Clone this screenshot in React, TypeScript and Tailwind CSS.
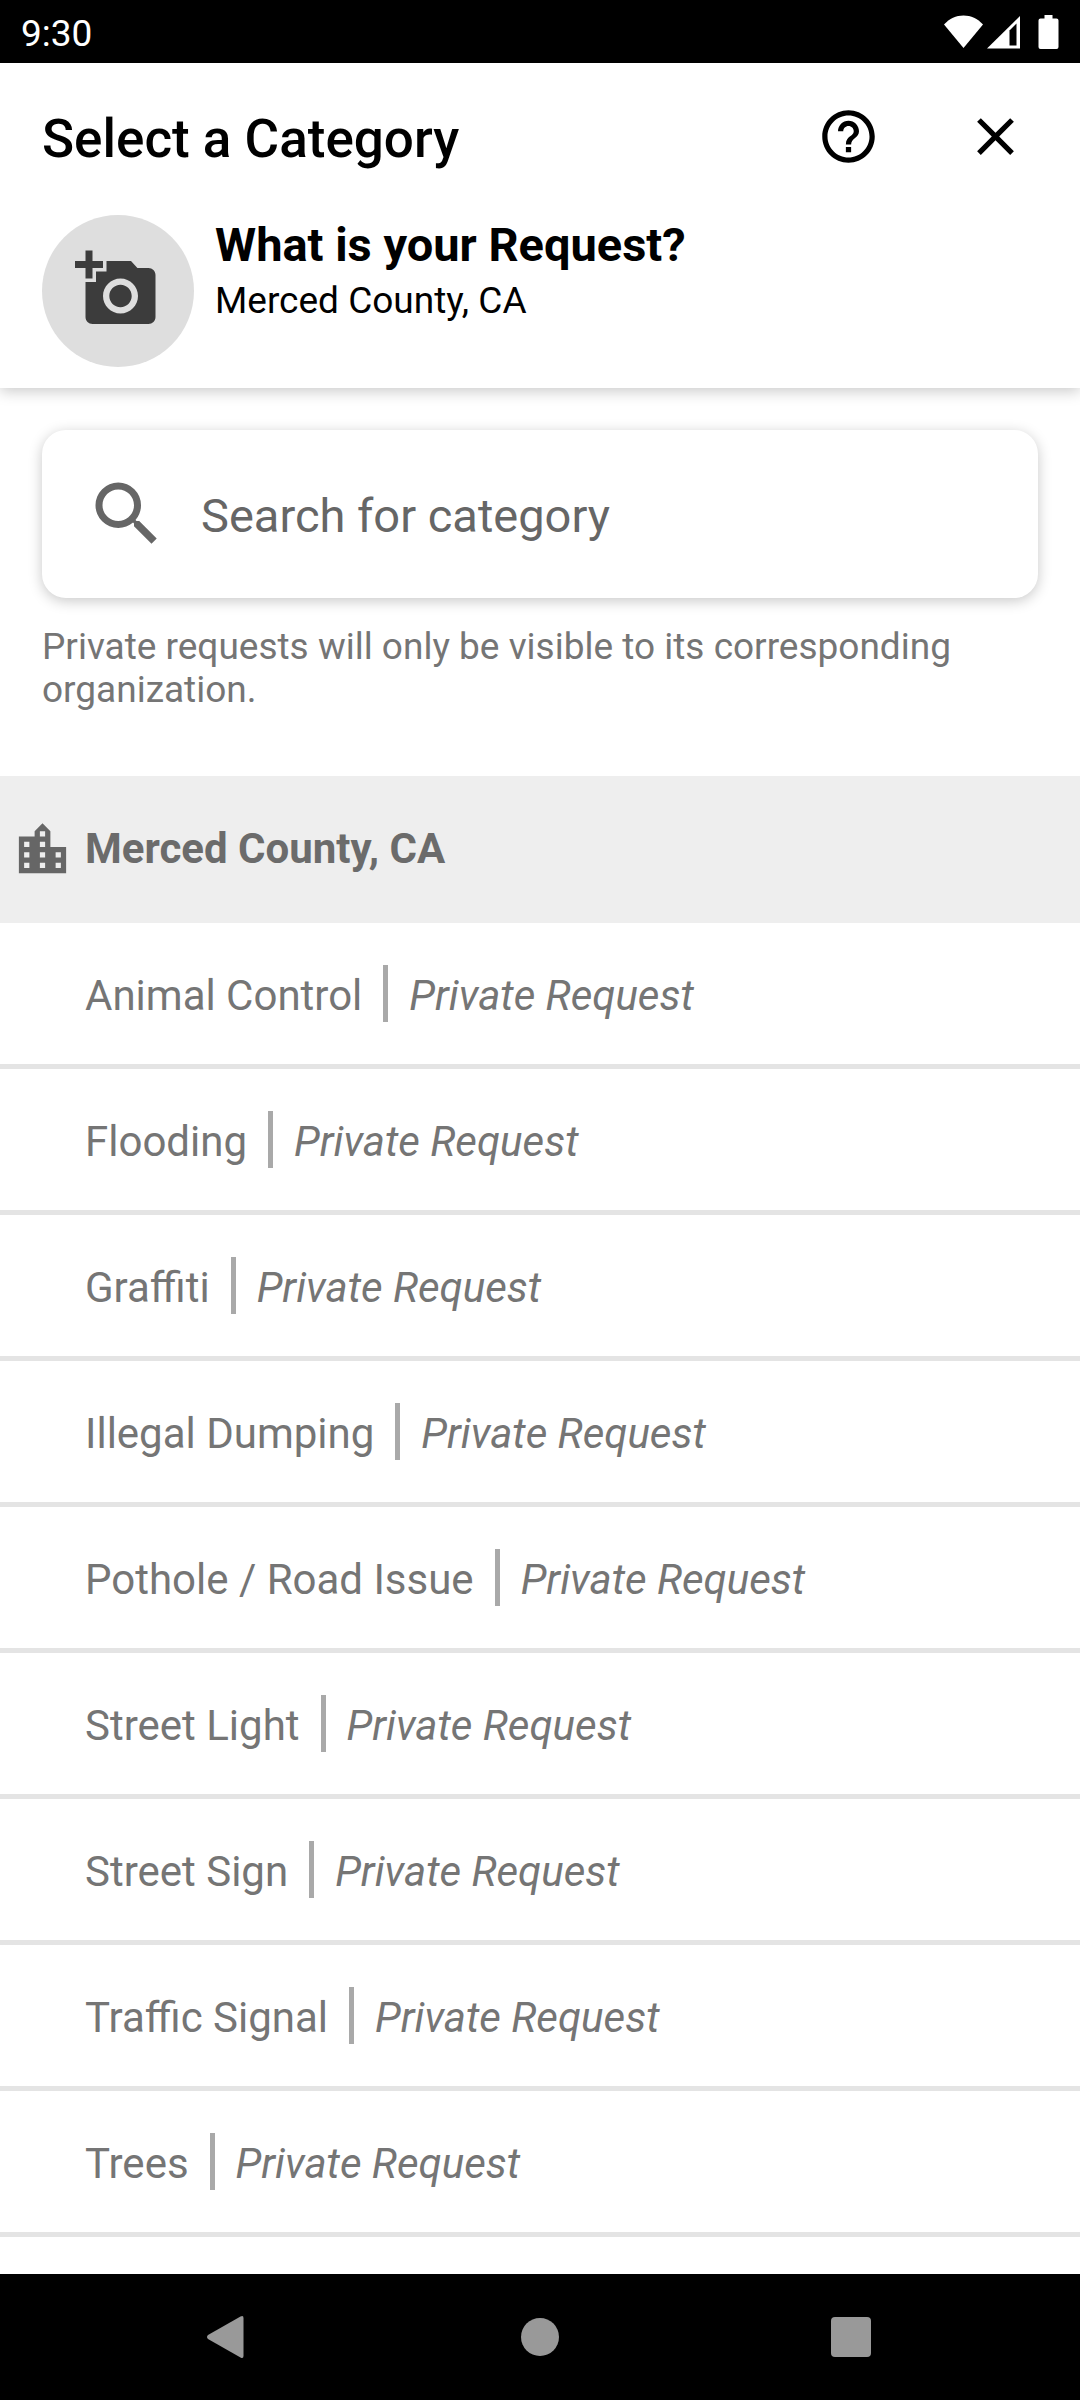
import { useState } from "react";
import {
  MdAddAPhoto,
  MdClose,
  MdHelpOutline,
  MdLocationCity,
  MdSearch,
} from "react-icons/md";

const categories = [
  "Animal Control",
  "Flooding",
  "Graffiti",
  "Illegal Dumping",
  "Pothole / Road Issue",
  "Street Light",
  "Street Sign",
  "Traffic Signal",
  "Trees",
];

function StatusBar() {
  return (
    <div className="flex h-[63px] items-center justify-between bg-black px-[21px] text-white">
      <span className="pt-1 text-[37px] leading-[42px]">9:30</span>
      <div className="flex items-center">
        <svg width="39" height="34" viewBox="0 0 39 34" fill="currentColor" aria-hidden="true">
          <path d="M0 9.5C5.5 3.5 12 0.5 19.5 0.5S33.5 3.5 39 9.5L19.5 33z" />
        </svg>
        <svg className="ml-1" width="33" height="34" viewBox="0 0 33 34" aria-hidden="true">
          <path d="M0 33.5L33 1v32.500z" fill="currentColor" />
          <path d="M22.5 15.5L29.5 8.5V30.5h-7z" fill="#000" />
        </svg>
        <svg className="ml-[18px]" width="21" height="34" viewBox="0 0 21 34" fill="currentColor" aria-hidden="true">
          <path d="M6.5 0h8v3.5H18.5a2 2 0 0 1 2 2V32a2 2 0 0 1-2 2H2.5a2 2 0 0 1-2-2V5.5a2 2 0 0 1 2-2h4z" />
        </svg>
      </div>
    </div>
  );
}

function Header() {
  return (
    <header className="shadow-[0_3px_14px_rgba(0,0,0,0.22)]">
      <div className="flex h-[147px] items-center pr-[53px] pl-[42px]">
        <h1 className="flex-1 pt-1 text-[53px] leading-[62px] font-medium">Select a Category</h1>
        <div className="flex gap-[84px]">
          <button type="button" aria-label="Help">
            <MdHelpOutline size={63} />
          </button>
          <button type="button" aria-label="Close">
            <MdClose size={63} />
          </button>
        </div>
      </div>
      <div className="flex gap-[21px] px-[42px] pt-[5px] pb-[21px]">
        <button
          type="button"
          aria-label="Add a photo"
          className="flex size-[152px] shrink-0 items-center justify-center rounded-full bg-[#dedede] pr-[2px] pb-1 text-[#3c3c3c]"
        >
          <MdAddAPhoto size={84} />
        </button>
        <div className="pt-[2px]">
          <h2 className="text-[47px] leading-[56px] font-bold">What is your Request?</h2>
          <p className="text-[37px] leading-[56px]">Merced County, CA</p>
        </div>
      </div>
    </header>
  );
}

function CategoryRow({ name }: { name: string }) {
  return (
    <li className="border-b-[5px] border-[#e4e4e4]">
      <button type="button" className="flex h-[141px] w-full items-center pl-[85px] text-left">
        <span className="pt-1">{name}</span>
        <span className="mx-[21px] h-[57px] w-[5px] bg-[#a9a9a9]" />
        <span className="pt-1 italic">Private Request</span>
      </button>
    </li>
  );
}

export default function App() {
  const [search, setSearch] = useState("");

  const shown = categories.filter((name) =>
    name.toLowerCase().includes(search.toLowerCase())
  );

  return (
    <div className="flex min-h-screen flex-col bg-white font-[Roboto,sans-serif] text-black">
      <StatusBar />
      <Header />

      <main className="flex-1 text-[#757575]">
        <div className="px-[42px] pt-[42px]">
          <label className="flex h-[168px] items-center rounded-3xl bg-white pl-[43px] shadow-[0_3px_14px_rgba(0,0,0,0.22)]">
            <MdSearch size={84} className="shrink-0 text-[#666666]" />
            <input
              type="text"
              aria-label="Search for category"
              placeholder="Search for category"
              value={search}
              onChange={(e) => setSearch(e.target.value)}
              className="ml-8 min-w-0 flex-1 pt-1 text-[47px] leading-[56px] outline-none placeholder:text-[#666666]"
            />
          </label>
          <p className="mt-[27px] text-[37px] leading-[43px]">
            Private requests will only be visible to its corresponding organization.
          </p>
        </div>

        <h3 className="mt-[65px] flex h-[147px] items-center gap-[11px] bg-[#eeeeee] pl-[11px] text-[42px] leading-[50px] font-bold text-[#6b6b6b]">
          <MdLocationCity size={63} className="text-[#666666]" />
          <span className="pb-[2px]">Merced County, CA</span>
        </h3>
        <ul className="text-[42px] leading-[50px]">
          {shown.map((name) => (
            <CategoryRow key={name} name={name} />
          ))}
        </ul>
      </main>

      <nav className="flex h-[126px] items-center justify-around bg-black px-[72px] text-[#999999]">
        <button type="button" aria-label="Back">
          <svg width="42" height="42" viewBox="0 0 42 42" fill="currentColor">
            <path d="M36.500 2V40Q36.500 43 33.500 41.500L1 23Q-1 21 1 19L33.500 0.500Q36.500 -1 36.500 2z" />
          </svg>
        </button>
        <button type="button" aria-label="Home">
          <svg width="42" height="42" viewBox="0 0 42 42" fill="currentColor">
            <circle cx="21" cy="21" r="19" />
          </svg>
        </button>
        <button type="button" aria-label="Recent apps">
          <svg width="42" height="42" viewBox="0 0 42 42" fill="currentColor">
            <rect x="0" y="1" width="40" height="40" rx="4" />
          </svg>
        </button>
      </nav>
    </div>
  );
}
